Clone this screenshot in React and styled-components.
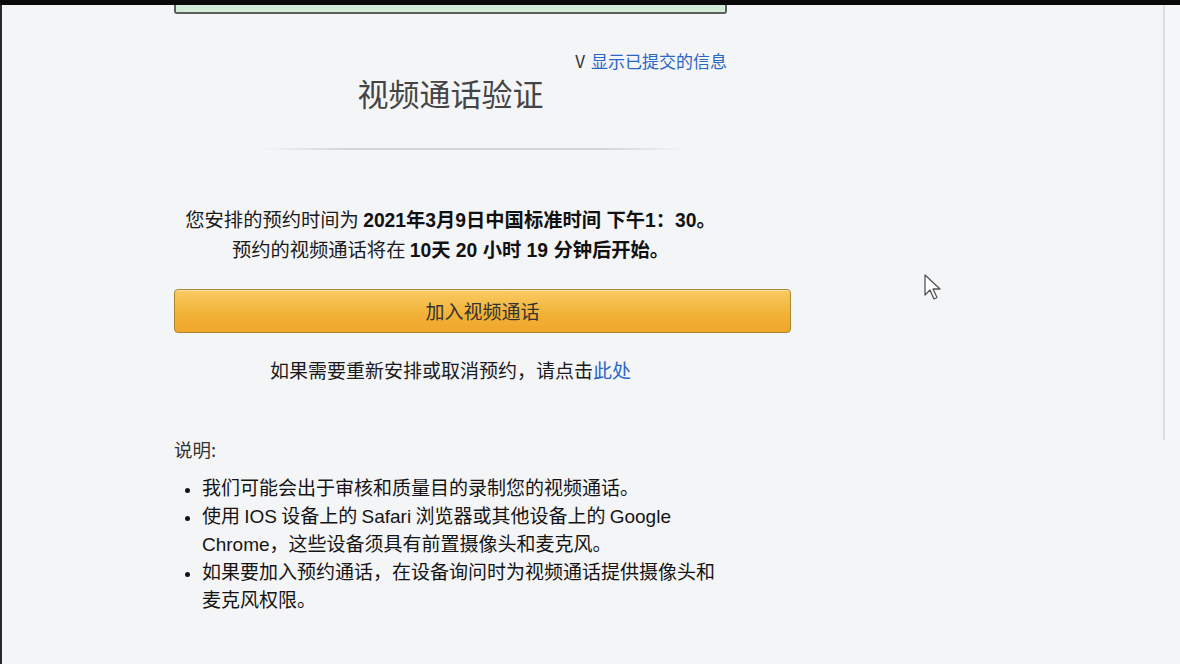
import React from "react";
import styled, { createGlobalStyle } from "styled-components";

const GlobalStyle = createGlobalStyle`
  html, body {
    margin: 0;
    padding: 0;
    background: #f4f5f7;
  }
  body {
    font-family: "Noto Sans CJK SC", "Liberation Sans", sans-serif;
    color: #1e1e1e;
  }
`;

const Screen = styled.div`
  width: 1180px;
  height: 664px;
  display: flex;
  flex-direction: column;
  overflow: hidden;
  background: #f4f5f7;
`;

const TopBar = styled.div`
  height: 5px;
  background: #0a0a0a;
  flex-shrink: 0;
`;

const Body = styled.div`
  flex: 1;
  display: flex;
  position: relative;
  border-left: 2px solid #2a2a2a;
`;

const Main = styled.main`
  flex: 1;
  padding-left: 172px;
`;

const Column = styled.div`
  width: 553px;
  display: flex;
  flex-direction: column;
`;

const Gutter = styled.div`
  width: 15px;
  align-self: flex-start;
  height: 435px;
  border-left: 2px solid #dcdee2;
  background: #f6f7f9;
`;

const SuccessBox = styled.div`
  height: 7px;
  background: #d3ecd9;
  border: 2px solid #5a5f5c;
  border-top: none;
  border-radius: 0 0 3px 3px;
`;

const LinkRow = styled.div`
  margin-top: 37px;
  text-align: right;
  font-size: 17px;
  line-height: 20px;
  color: #333;
`;

const Link = styled.a`
  color: #2a66c4;
  text-decoration: none;
  margin-left: ${(p) => (p.$gap ? "6px" : "0")};
`;

const Title = styled.h1`
  margin: 4px 0 0;
  text-align: center;
  font-size: 31px;
  line-height: 36px;
  font-weight: 400;
  color: #444;
`;

const Divider = styled.div`
  margin: 37px 0 0 86px;
  width: 430px;
  height: 2px;
  background: linear-gradient(to right, rgba(210, 214, 218, 0), #d2d6da 20%, #d2d6da 80%, rgba(210, 214, 218, 0));
`;

const Info = styled.div`
  margin-top: 54px;
  text-align: center;
  font-size: 19.3px;
  color: #1a1a1a;
`;

const InfoLine = styled.div`
  height: 30px;
  line-height: 30px;
  white-space: nowrap;

  b {
    font-family: "Liberation Sans", "Noto Sans CJK SC", sans-serif;
    font-weight: 700;
    color: #111;
    line-height: 1;
  }
`;

const JoinButton = styled.button`
  margin-top: 25px;
  width: 617px;
  height: 44px;
  padding: 0 0 2px;
  border: 1px solid #a88734;
  border-radius: 4px;
  background: linear-gradient(to bottom, #f8cb62, #f2b136 60%, #efa62b);
  box-shadow: inset 0 1px 0 rgba(255, 255, 255, 0.45);
  font-family: "Noto Sans CJK SC", sans-serif;
  font-size: 19px;
  line-height: 1;
  color: #333;
  cursor: pointer;
`;

const Note = styled.p`
  margin: 25px 0 0;
  text-align: center;
  font-size: 19px;
  line-height: 24px;
  color: #1a1a1a;
`;

const Heading = styled.div`
  margin-top: 55px;
  font-size: 18.5px;
  line-height: 24px;
  color: #333;
`;

const List = styled.ul`
  margin: 12px 0 0;
  padding: 0 0 0 28px;
  font-size: 19px;
  color: #141414;
`;

const Item = styled.li`
  line-height: 28px;
  &::marker {
    font-size: 14px;
  }
`;

const Latin = styled.span`
  font-family: "Liberation Sans", sans-serif;
  line-height: 1;
`;

const Cursor = styled.svg`
  position: absolute;
  left: 921px;
  top: 268px;
`;

export default function App() {
  return (
    <>
      <GlobalStyle />
      <Screen>
        <TopBar />
        <Body>
          <Main>
            <Column>
              <SuccessBox />
              <LinkRow>
                V<Link href="#" $gap>显示已提交的信息</Link>
              </LinkRow>
              <Title>视频通话验证</Title>
              <Divider />
              <Info>
                <InfoLine>
                  您安排的预约时间为 <b>2021年3月9日中国标准时间 下午1：30。</b>
                </InfoLine>
                <InfoLine>
                  预约的视频通话将在 <b>10天 20 小时 19 分钟后开始。</b>
                </InfoLine>
              </Info>
              <JoinButton>加入视频通话</JoinButton>
              <Note>
                如果需要重新安排或取消预约，请点击<Link href="#">此处</Link>
              </Note>
              <Heading>说明:</Heading>
              <List>
                <Item>我们可能会出于审核和质量目的录制您的视频通话。</Item>
                <Item>
                  使用 <Latin>IOS</Latin> 设备上的 <Latin>Safari</Latin> 浏览器或其他设备上的{" "}
                  <Latin>Google Chrome</Latin>，这些设备须具有前置摄像头和麦克风。
                </Item>
                <Item>如果要加入预约通话，在设备询问时为视频通话提供摄像头和麦克风权限。</Item>
              </List>
            </Column>
          </Main>
          <Gutter />
          <Cursor width="22" height="30" viewBox="0 0 22 30">
            <path
              d="M2 2 L2 22 L7 17 L11 26 L14 24.5 L10 16 L17 16 Z"
              fill="#fff"
              stroke="#555"
              strokeWidth="1.3"
              strokeLinejoin="round"
            />
          </Cursor>
        </Body>
      </Screen>
    </>
  );
}
